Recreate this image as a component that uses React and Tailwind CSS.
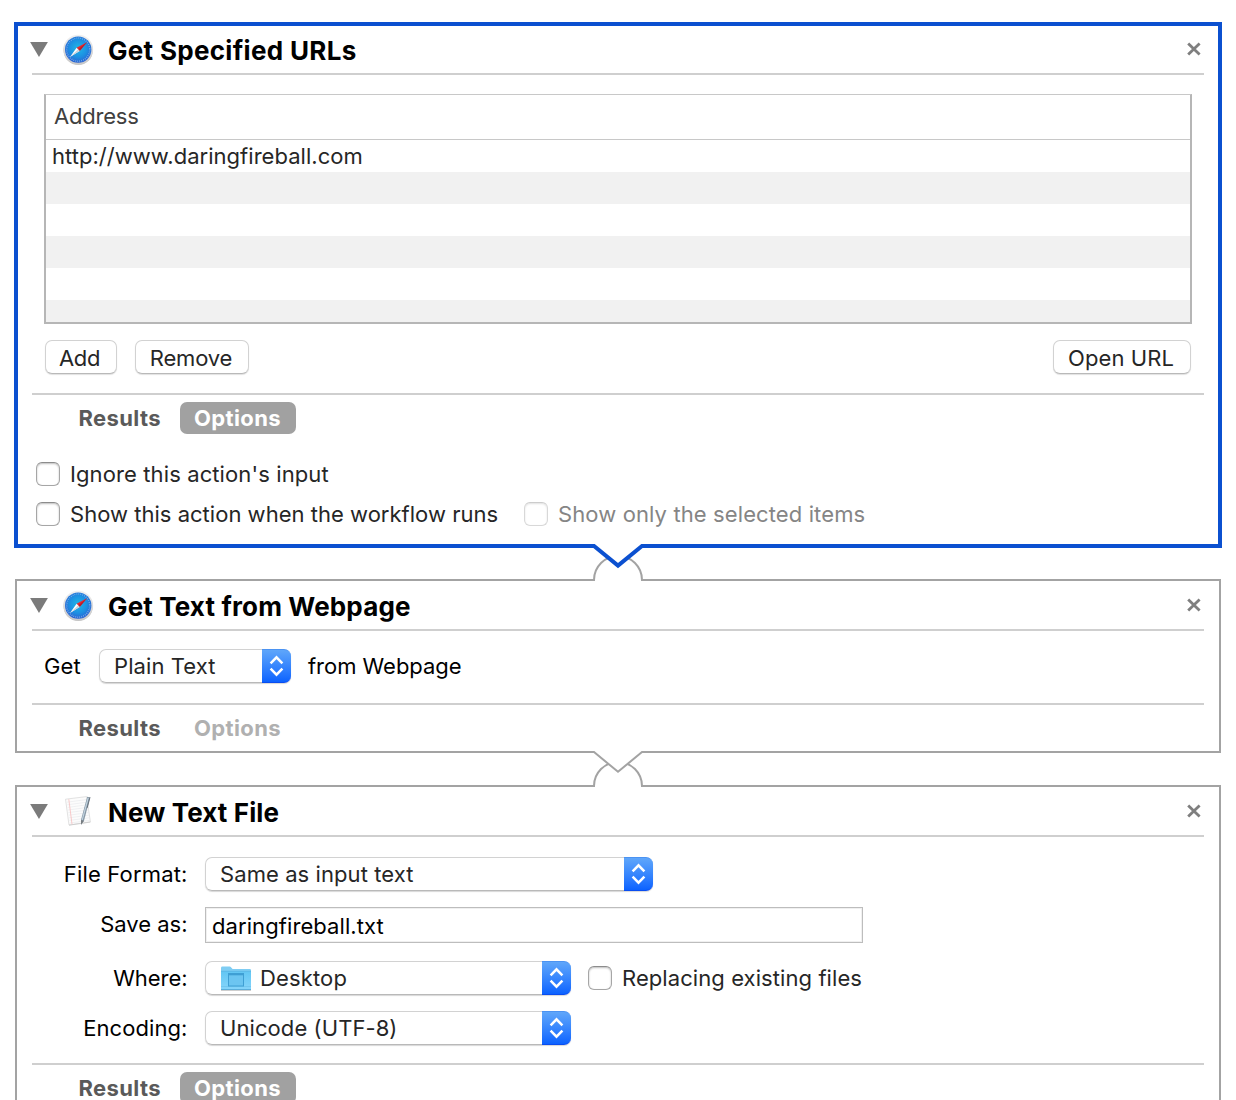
import React from 'react';

function Triangle() {
  return (
    <svg className="-ml-[2px] mt-[17px] h-[15px] w-[18px] shrink-0" viewBox="0 0 18 15">
      <path d="M0.1 0.1H17.9L9 15Z" fill="#7b7b7b" />
    </svg>
  );
}

function CloseIcon() {
  return (
    <svg className="mr-[3px] ml-auto mt-[17px] h-[14px] w-[14px] shrink-0" viewBox="0 0 14 14">
      <path d="M1.2 1.4L12.6 12.6M12.6 1.4L1.2 12.6" stroke="#7f7f7f" strokeWidth="2.8" fill="none" />
    </svg>
  );
}

function SafariIcon() {
  return (
    <svg className="h-8 w-8" viewBox="0 0.4 32 32">
      <defs>
        <linearGradient id="rim" x1="0" y1="0" x2="0" y2="1">
          <stop offset="0" stopColor="#f1f1f1" />
          <stop offset="1" stopColor="#c8c8c8" />
        </linearGradient>
        <radialGradient id="sea" cx="0.5" cy="0.45" r="0.55">
          <stop offset="0" stopColor="#1fb8e6" />
          <stop offset="0.6" stopColor="#1d90e2" />
          <stop offset="1" stopColor="#2a62d2" />
        </radialGradient>
      </defs>
      <circle cx="16.2" cy="16.9" r="14.6" fill="#a9a9a9" opacity="0.7" />
      <circle cx="16.2" cy="16" r="14.9" fill="url(#rim)" />
      <circle cx="16.2" cy="16" r="13.2" fill="url(#sea)" />
      <circle cx="16.2" cy="16" r="11.6" fill="none" stroke="#b5d3f5" strokeWidth="1.5" strokeDasharray="0.8 1.22" opacity="0.6" />
      <path d="M25 8.6L14.6 14.2L17.6 17.4Z" fill="#f0262a" />
      <path d="M25 8.6L16 15.8L17.6 17.4Z" fill="#b5202d" />
      <path d="M8 23.4L14.6 14.2L17.6 17.4Z" fill="#ffffff" />
      <path d="M8 23.4L16 15.8L17.6 17.4Z" fill="#ccd3da" />
    </svg>
  );
}

function TextFileIcon() {
  return (
    <svg className="h-8 w-8" viewBox="0 1.2 32 32">
      <path d="M3.5 4.4L24.6 1.8L28.4 27L7 30.2Z" fill="#fcfcfc" stroke="#dadada" strokeWidth="0.8" />
      <path d="M7 30.4L28.4 27.3" stroke="#c4c4c4" strokeWidth="0.7" />
      <g stroke="#e9ebee" strokeWidth="0.7">
        <path d="M5 7.4L25 4.7M5.4 10L25.4 7.3M5.8 12.6L25.8 9.9M6.1 15.2L26.2 12.5M6.4 17.8L26.6 15.1M6.8 20.4L27 17.7M7.1 23L27.4 20.3M7.4 25.6L27.8 22.9M7.8 28.2L28 25.5" />
      </g>
      <path d="M6.8 4.4L10 29.4" stroke="#f7c4c4" strokeWidth="0.9" />
      <path d="M25.2 2L28 2.6L22 26L19 30L19 25.2Z" fill="#8797a4" />
      <path d="M25.6 3L26.8 3.3L20.8 25.2L19.7 25Z" fill="#c3d5e2" />
      <path d="M19 25.2L21.8 26.2L19 30Z" fill="#777c80" />
      <path d="M28 2.4L25.2 13" stroke="#5f6a75" strokeWidth="0.9" />
    </svg>
  );
}

function FolderIcon() {
  return (
    <svg className="mr-[9px] ml-px h-[26px] w-[30px]" viewBox="0 0 30 26">
      <defs>
        <linearGradient id="folder" x1="0" y1="0" x2="0" y2="1">
          <stop offset="0" stopColor="#62c6f3" />
          <stop offset="1" stopColor="#86d5fb" />
        </linearGradient>
      </defs>
      <path d="M0 25.4H30" stroke="#c9c9c9" strokeWidth="1" />
      <path d="M0 3Q0 1.6 1.4 1.6H8.6Q9.6 1.6 10.2 2.4L11.6 4H28.8Q30 4 30 5.2V24.6H0Z" fill="#7fcdf3" />
      <path d="M0 6.2H30V24.6H0Z" fill="url(#folder)" />
      <path d="M0 6.3H30" stroke="#59b4e2" strokeWidth="0.8" />
      <path d="M0 21.5H30" stroke="#6fc3ec" strokeWidth="0.8" />
      <path d="M0 24.5H30" stroke="#5aaedb" strokeWidth="1" />
      <rect x="7.5" y="8.5" width="15" height="12.5" fill="#6cc5f1" stroke="#3f9fd4" strokeWidth="1" />
      <path d="M7.5 9.3H22.5" stroke="#3f9fd4" strokeWidth="2" />
    </svg>
  );
}

function Header({ icon, title, className }) {
  return (
    <header className="box-content flex h-[48px] border-b-2 border-[#cfcfcf]">
      <Triangle />
      <div className="mt-[9px] ml-[14px] h-8 w-8 shrink-0">{icon}</div>
      <h2 className={`mt-[10px] ml-[14px] text-[26px] leading-[31px] font-bold whitespace-nowrap text-black ${className}`}>{title}</h2>
      <CloseIcon />
    </header>
  );
}

function Button({ children, className }) {
  return (
    <button
      className={`h-[34px] rounded-[7px] border border-[#d2d2d2] border-b-[#b9b9b9] bg-white pt-[2px] leading-[30px] text-[#262626] shadow-[0_1px_1px_rgba(0,0,0,0.12)] ${className}`}
    >
      {children}
    </button>
  );
}

function Popup({ children, className }) {
  return (
    <div className={`flex h-[34px] shrink-0 rounded-[7px] shadow-[0_1px_1px_rgba(0,0,0,0.16)] ${className}`}>
      <div className="flex flex-1 items-center rounded-l-[7px] border border-r-0 border-[#d2d2d2] border-b-[#b9b9b9] bg-white pl-[14px] leading-[32px] whitespace-nowrap text-[#262626]">
        {children}
      </div>
      <div className="flex w-[29px] items-center justify-center rounded-r-[7px] border-t border-b border-t-[#4b93f2] border-b-[#0a4df0] bg-linear-to-b from-[#5fa6fa] to-[#0b62ff]">
        <svg className="h-[22px] w-[15px]" viewBox="0 0 15 22">
          <path d="M1.6 8.4L7.5 2.4L13.4 8.4M1.6 13.6L7.5 19.6L13.4 13.6" fill="none" stroke="#fff" strokeWidth="2.5" />
        </svg>
      </div>
    </div>
  );
}

function Checkbox({ children, disabled, className = '' }) {
  return (
    <label className={`flex h-6 items-center whitespace-nowrap ${disabled ? 'text-[#858585]' : 'text-[#262626]'} ${className}`}>
      <span
        className={
          disabled
            ? 'mr-[10px] h-6 w-6 rounded-[6px] border border-[#d8d8d8] border-t-[#cccccc] bg-white shadow-[inset_0_1px_2px_rgba(0,0,0,0.12)]'
            : 'mr-[10px] h-6 w-6 rounded-[6px] border border-[#a6a6a6] border-t-[#8c8c8c] bg-white shadow-[inset_0_1px_2px_rgba(0,0,0,0.26)]'
        }
      />
      {children}
    </label>
  );
}

function Tabs({ active }) {
  return (
    <div className="flex h-8 items-center pl-[46.5px] leading-8 font-bold tracking-[0.36px]">
      <span className="w-[101.5px] text-[#5a5a5a]">Results</span>
      <span className={active ? 'w-[116px] rounded-[7px] bg-[#a1a1a1] pl-[14px] text-white' : 'w-[116px] pl-[14px] text-[#b0b0b0]'}>Options</span>
    </div>
  );
}

function Connector({ active }) {
  return active ? (
    <div className="relative z-10 h-[31px]">
      <svg className="absolute -top-[4px] left-[582px] h-[38px] w-[72px]" viewBox="0 0 72 38">
        <path d="M13 38V34H59V38Z" fill="#fff" />
        <path d="M12 37V36A24 24 0 0 1 60 36V37" fill="#fff" stroke="#a3a3a3" strokeWidth="2" />
        <path d="M11 0H61L60 2L36 21.6L12 2Z" fill="#fff" />
        <path d="M11 2H12L36 21.6L60 2H61" fill="none" stroke="#0b50d0" strokeWidth="4" />
      </svg>
    </div>
  ) : (
    <div className="relative z-10 h-[32px]">
      <svg className="absolute -top-[2px] left-[582px] h-[37px] w-[72px]" viewBox="0 0 72 37">
        <path d="M13 37V33H59V37Z" fill="#fff" />
        <path d="M12 36V35A24 24 0 0 1 60 35V36" fill="#fff" stroke="#a3a3a3" strokeWidth="2" />
        <path d="M11.5 0H60.5L60 1L36 20.8L12 1Z" fill="#fff" />
        <path d="M11 1H12L36 20.8L60 1H61" fill="none" stroke="#a3a3a3" strokeWidth="2" />
      </svg>
    </div>
  );
}

function Label({ children, className = '' }) {
  return <div className={`mr-[17.5px] w-[155.5px] shrink-0 text-right leading-8 text-black ${className}`}>{children}</div>;
}

export default function App() {
  return (
    <div className="h-[1100px] w-[1236px] overflow-hidden bg-white pt-[22px] font-['Inter',sans-serif] text-[22px] tracking-[0.08px]">
      <section className="mx-[14px] h-[526px] border-4 border-[#0b50d0] px-[14px]">
        <div className="-mt-px">
          <Header icon={<SafariIcon />} title="Get Specified URLs" className="tracking-[0.31px]" />
        </div>
        <div className="mx-3 mt-[19px] h-[230px] border-2 border-t border-[#b6b6b6] border-t-[#c8c8c8]">
          <div className="box-content h-[44px] border-b border-[#c8c8c8] pl-2 leading-[42px] tracking-[-0.2px] text-[#404040]">Address</div>
          <div className="h-8 pl-[6px] leading-8 tracking-[0.035px] text-[#262626]">http://www.daringfireball.com</div>
          <div className="h-8 bg-[#f1f1f1]" />
          <div className="h-8" />
          <div className="h-8 bg-[#f1f1f1]" />
          <div className="h-8" />
          <div className="h-[22px] bg-[#f1f1f1]" />
        </div>
        <div className="mx-[13px] mt-4 flex">
          <Button className="w-[72px] pr-[3px] tracking-[-0.3px]">Add</Button>
          <Button className="ml-[18px] w-[114px] pr-[2px] tracking-[-0.14px]">Remove</Button>
          <Button className="ml-auto w-[138px] pr-[2px]">Open URL</Button>
        </div>
        <div className="mt-[19px] border-t-2 border-[#cfcfcf] pt-[7px]">
          <Tabs active />
        </div>
        <div className="mt-7 pl-1">
          <Checkbox className="tracking-[0.11px]">Ignore this action's input</Checkbox>
          <div className="mt-4 flex">
            <Checkbox className="w-[488px] tracking-[0.02px]">Show this action when the workflow runs</Checkbox>
            <Checkbox disabled className="tracking-[0.11px]">Show only the selected items</Checkbox>
          </div>
        </div>
      </section>

      <Connector active />

      <section className="mx-[15px] h-[174px] border-2 border-[#a3a3a3] px-[15px]">
        <Header icon={<SafariIcon />} title="Get Text from Webpage" className="tracking-[0.15px]" />
        <div className="mt-[18px] flex items-center pl-3 leading-[34px] text-black">
          <span className="w-[55px]">Get</span>
          <Popup className="w-[192px]">Plain Text</Popup>
          <span className="ml-[17px] tracking-[-0.03px]">from Webpage</span>
        </div>
        <div className="mt-5 border-t-2 border-[#cfcfcf] pt-[7px]">
          <Tabs />
        </div>
      </section>

      <Connector />

      <section className="mx-[15px] h-[400px] border-2 border-[#a3a3a3] px-[15px]">
        <Header icon={<TextFileIcon />} title="New Text File" className="tracking-[0.13px]" />
        <div className="mt-5 flex items-center">
          <Label className="tracking-[0.16px]">File Format:</Label>
          <Popup className="w-[448px]">Same as input text</Popup>
        </div>
        <div className="mt-4 flex h-9">
          <Label className="mt-px tracking-[-0.02px]">Save as:</Label>
          <div className="h-9 w-[658px] border border-[#bdbdbd] bg-white pt-px pl-[6px] leading-[34px] text-black shadow-[inset_0_0_0_1px_#f0f0f0]">
            daringfireball.txt
          </div>
        </div>
        <div className="mt-[18px] flex items-center">
          <Label className="tracking-[-0.05px]">Where:</Label>
          <Popup className="w-[366px]">
            <FolderIcon />
            <span className="tracking-[0.14px]">Desktop</span>
          </Popup>
          <Checkbox className="ml-[17px]">Replacing existing files</Checkbox>
        </div>
        <div className="mt-4 flex items-center">
          <Label>Encoding:</Label>
          <Popup className="w-[366px]">Unicode (UTF-8)</Popup>
        </div>
        <div className="mt-[18px] border-t-2 border-[#cfcfcf] pt-[7px]">
          <Tabs active />
        </div>
      </section>
    </div>
  );
}
